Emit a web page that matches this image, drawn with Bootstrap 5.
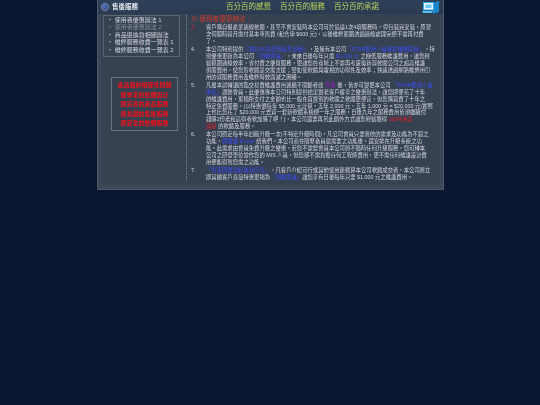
<!DOCTYPE html>
<html lang="zh-Hant">
<head>
<meta charset="utf-8">
<title>售後服務</title>
<link href="https://cdn.jsdelivr.net/npm/bootstrap@5.3.0/dist/css/bootstrap.min.css" rel="stylesheet">
<style>
html,body{height:405px;overflow:hidden}
body{margin:0;background-color:#0a1530;background-image:radial-gradient(circle at 1.5px 1.5px,#122039 0.8px,transparent 1px);background-size:4px 4px;font-family:"Liberation Sans","Noto Sans CJK TC",sans-serif;color:#c9ced6}
.shell{width:347px;height:190px;margin-left:97px;background:#3c4858;border:1px solid #4c5767;border-top:0;filter:blur(.25px)}
.topbar{height:14px;padding:0 3px 0 3px;background:linear-gradient(#2f415a,#2b3a50)}
.orb{width:8px;height:8px;border-radius:50%;background:radial-gradient(circle at 40% 40%,#5475c9,#1c2f66);border:1px solid #7f8fa8}
.brand{font-size:6.5px;color:#e4e8ee;font-weight:700;margin-left:3px;width:114px}
.slogans{font-size:7.5px;color:#bbd25b;gap:9px}
.logoicon{margin-left:auto}
.inner{height:171px;margin:0 3px;background:#364151;padding-top:1px}
.side{width:85px;flex:none}
.menubox{width:77px;height:42px;border:1px solid #5c6776;padding:1px 2px 0 3px;font-size:6px;line-height:7.4px;color:#d4d8de;margin-left:2px}
.menubox .dim{color:#858e9b}
.alertbox{width:67px;height:54px;border:1px solid #667182;margin:20px 0 0 10px;padding:3px 2px;font-size:6px;line-height:9.5px;color:#f0101c;font-weight:700;text-align:center;background:#36414f}
.content{border-left:1px dotted #778292;flex:none;width:251px;height:166px;padding:0 1px 0 4px;font-size:5.35px;line-height:6.9px;color:#d4d8df;overflow:hidden}
.heading{font-size:6.6px;color:#d33a2b;line-height:7px;margin:0 0 2px}
.term{display:flex;margin-bottom:1.3px}
.num{width:15px;flex:none}
.num.red{color:#e01b24}
.term p{margin:0;flex:1;white-space:nowrap}
.bl{color:#3a4cff}
.rd{color:#ef1a22}
.pu{color:#b01ae0}
</style>
</head>
<body>
<main class="shell d-flex flex-column">
  <header class="topbar d-flex align-items-center">
    <span class="orb"></span>
    <span class="brand">售後服務</span>
    <span class="slogans d-flex"><span>百分百的感覺</span><span>百分百的服務</span><span>百分百的承諾</span></span>
    <svg class="logoicon" width="18" height="13" viewBox="0 0 18 13" aria-hidden="true"><path d="M11 2l6-2v11l-6 2z" fill="#1b87c9"/><rect x="1.5" y="1.5" width="10" height="7.5" fill="#e6f4ff" stroke="#38a9e8"/><rect x="3.5" y="3.5" width="6" height="3.5" fill="#6cc6f2"/><path d="M0 10h11l-1 2H1z" fill="#55bff0"/></svg>
  </header>
  <div class="inner d-flex">
    <aside class="side">
      <ul class="menubox list-unstyled mb-0">
        <li>‧ 使用者優惠辦法 1</li>
        <li class="dim">‧ 使用者優惠辦法 2</li>
        <li>‧ 商品退換貨相關辦法</li>
        <li>‧ 維修服務收費一覽表 1</li>
        <li>‧ 維修服務收費一覽表 2</li>
      </ul>
      <div class="alertbox">
        <div>產品間的相容性問題</div>
        <div>最專業的軟體設計</div>
        <div>最完善的產品服務</div>
        <div>最長期的售後服務</div>
        <div>最安全的軟體服務</div>
      </div>
    </aside>
    <section class="content">
      <div class="heading">※ 使用者優惠辦法：</div>
      <div class="term"><span class="num red">3.</span><p>客戶購自備產業連線軟體，甚至不會安裝時本公司可於協議1次4項服務時，停包裝完安裝，原習<br>次伺服時段月需付基本車馬費 (和合申 $600 元)，以後維修範圍透過連線處理完便不需再付費<br>了。</p></div>
      <div class="term"><span class="num">4.</span><p>本公司特別提供<span class="bl">『前1000名送西班牙語者』</span>，及擁有本公司<span class="bl">『STAR愛用人員專案優惠區者』</span>，特<br>別優惠更新為本公司<span class="bl">『頂級會員』</span>，未來日後每年只需 <span class="bl">$1,000 元</span> 之極低服務維護費用，讓您輕<br>鬆範圍連線效率，省付費之優質服務，更讓您在商場上不需再考慮復新買軟體公司之超高維護<br>俱服費用，使您對軟體是交需支援；譬如使軟體與電視的功得性及效率；快速透過網路維修用引<br>用的資服務費用及維修時效滿減之困擾。</p></div>
      <div class="term"><span class="num">5.</span><p>凡屬本試轉讀的臨交易費維護費用連續不間斷者達 <span class="pu">百年</span> 後，皆亦可變更本公司 <span class="bl">『STAR愛用人員</span><br><span class="bl">專案』</span>調節會員。此優惠專本公司特別提供給忠實老客戶權享之優惠辦法，讓您即便花了十年<br>的維護費用，累積所支付之金額也比一般在買賣別的軟體之軟體更便宜，但您購買費了十年之<br>特定免費服務。(以特惠價每年 $5,000 元計算，五年 2,000 元，五年 1,000 元 = $20,000 元)實際<br>上也比您花了 $20,000 元去買一套新軟體系統便一年之服務，日後九年之服務費用皆須繼續付<br>錢購2份老和這得者軟加購了吧！)，本公司還要再另此額外方式讓您輕鬆獲得 <span class="rd">100%完美</span><br><span class="rd">滿意</span> 的軟體及服務。</p></div>
      <div class="term"><span class="num">6.</span><p>本公司原定每半年四版升級一次(不特定升級時間)，凡公司會員只要將他的需求及功能為不錯之<br>功能，<span class="bl">郵電或 E-mail</span> 給我們，本公司商在隨緊審員最需要之功能後，還安排在升級系統之功<br>能。此需求由會員免費升級之優惠，若您不需要會員本公司將不隨時任何升級服務，您可轉本<br>公司之研發單位當作您的 MIS 人員，但您卻不需負擔任何工程師費用，更不需任何維護設計費<br>用便能得到您需之功能。</p></div>
      <div class="term"><span class="num">7.</span><p><span class="bl">『份軍西要與好康双分享』</span>，凡客戶介紹可行或其他使用連轄算本公司軟體成交者，本公司將立<br>即其續客戶直接特惠更場為<span class="bl">『頂級會員』</span>讓您享有日後每年只要 $1,000 元之維護費用。</p></div>
    </section>
  </div>
</main>
<script src="https://cdn.jsdelivr.net/npm/bootstrap@5.3.0/dist/js/bootstrap.bundle.min.js"></script>
</body>
</html>
